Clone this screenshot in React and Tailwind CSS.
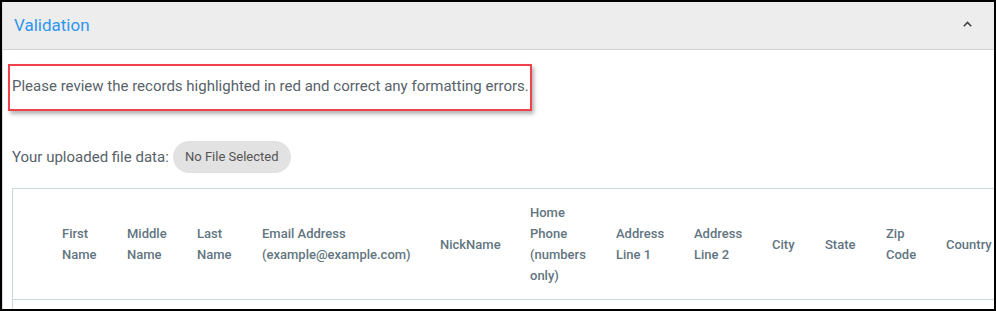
import React from "react";

const cols = [
  { w: 49, t: [""] },
  { w: 65, t: ["First", "Name"] },
  { w: 70, t: ["Middle", "Name"] },
  { w: 65, t: ["Last", "Name"] },
  { w: 178, t: ["Email Address", "(example@example.com)"] },
  { w: 90, t: ["NickName"] },
  { w: 86, t: ["Home", "Phone", "(numbers", "only)"] },
  { w: 78, t: ["Address", "Line 1"] },
  { w: 78, t: ["Address", "Line 2"] },
  { w: 53, t: ["City"] },
  { w: 61, t: ["State"] },
  { w: 60, t: ["Zip", "Code"] },
  { w: 80, t: ["Country"] },
];

export default function App() {
  return (
    <div className="w-[996px] h-[311px] overflow-hidden bg-white border-2 border-black font-['Roboto',sans-serif]">
      <div className="h-full border-l border-[#dcdcdc] flex flex-col">
        <div className="h-[48px] shrink-0 bg-[#ededed] border-b border-[#d4d4d4] flex items-center justify-between pl-[11px] pr-[22px]">
          <span className="text-[17px] text-[#2f96f0]">Validation</span>
          <svg width="9" height="6" viewBox="0 0 9 6" className="-mt-[4px]">
            <polyline points="0.8,5.2 4.5,1.5 8.2,5.2" fill="none" stroke="#3d4448" strokeWidth="1.6" />
          </svg>
        </div>
        <div className="flex-1 min-h-0 overflow-hidden pl-[9px]">
          <div className="mt-[14px] -ml-[4px] w-[524px] h-[47px] border-2 border-[#f0424a] shadow-[2px_3px_4px_rgba(0,0,0,0.3)] flex items-center pl-[2px]">
            <span className="text-[15px] text-[#57626a] -mt-[3px] whitespace-nowrap">
              Please review the records highlighted in red and correct any formatting errors.
            </span>
          </div>
          <div className="mt-[30px] flex items-center h-[32px]">
            <span className="text-[15px] text-[#57626a]">Your uploaded file data:</span>
            <span className="ml-[4px] h-[32px] w-[118px] rounded-full bg-[#e2e2e2] flex items-center justify-center text-[13px] text-[#555]">
              No File Selected
            </span>
          </div>
          <div className="mt-[15px] w-[1200px] border border-[#cfd8dc] border-r-0">
            <div className="h-[111px] flex items-center border-b border-[#cfd8dc]">
              {cols.map((c, i) => (
                <div
                  key={i}
                  style={{ width: c.w }}
                  className="shrink-0 text-[13px] leading-[21px] font-medium text-[#62757f]"
                >
                  {c.t.map((l, j) => (
                    <div key={j} className="whitespace-nowrap">{l}</div>
                  ))}
                </div>
              ))}
            </div>
            <div className="h-[40px]" />
          </div>
        </div>
      </div>
    </div>
  );
}
